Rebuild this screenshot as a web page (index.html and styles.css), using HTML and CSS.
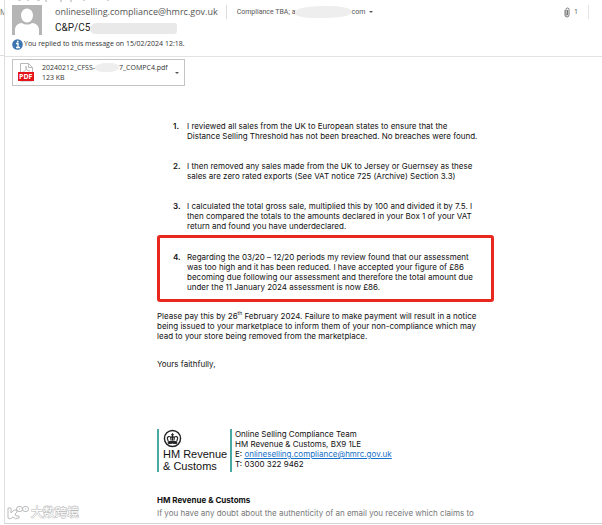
FILE: index.html
```
<!DOCTYPE html>
<html lang="en">
<head>
	<meta charset="UTF-8">
	<title>C&amp;P - Message</title>
	<link rel="stylesheet" href="styles.css">
</head>
<body>
	<div class="window">
		<div class="list-edge"><span class="list-text">M</span></div>
		<main class="mail">
			<svg class="clipped" width="130" height="2" viewBox="0 0 130 2"><path d="M13 0h3M22 0h2M32 0h3M41 0v2M56 0v2M66 0v2M78 0h2M102 0h2" stroke="#aaa"/></svg>
			<header class="mail-head">
				<svg class="avatar" width="30" height="30" viewBox="0 0 30 30">
					<rect width="30" height="30" fill="#b5b5b5"/>
					<ellipse cx="15" cy="10.500" rx="6" ry="7" fill="#fff"/>
					<path d="M3 30v-5c0-4 3-7 7-7 3 2 7 2 10 0 4 0 7 3 7 7v5z" fill="#fff"/>
				</svg>
				<div class="head-text">
					<div class="address-row">
						<span class="sender">onlineselling.compliance@hmrc.gov.uk</span>
						<span class="recipients">Compliance TBA; a<span class="smudge smudge-to"></span>com <i class="caret"></i></span>
						<span class="clip-count">
							<svg width="6" height="11" viewBox="0 0 6 11"><path d="M1 3v5a2 2 0 0 0 4 0V2.500a1.500 1.500 0 0 0-3 0V8h1.500V3" fill="none" stroke="#777"/></svg>
							1
						</span>
					</div>
					<h1 class="subject">C&amp;P/C5<span class="smudge smudge-subject"></span></h1>
				</div>
			</header>
			<p class="replied">
				<svg width="11" height="11" viewBox="0 0 11 11"><circle cx="5.500" cy="5.500" r="5.300" fill="#3c74b0"/><path d="M4 4.500h2V8M4 8.500h4M5 2.500h1.500" fill="none" stroke="#fff" stroke-width="1.300"/></svg>
				You replied to this message on 15/02/2024 12:18.
			</p>
			<div class="attachments">
				<button class="attachment" type="button">
					<svg width="17" height="19" viewBox="0 0 17 19">
						<path d="M2.500 18V.500h8l4 4V18z" fill="#fff" stroke="#b9b9b9"/>
						<path d="M10.500.500v4h4" fill="none" stroke="#b9b9b9"/>
						<path d="M5 9c3-1 4-4 3-6-1 2 1 5 4 5" fill="none" stroke="#bbb"/>
						<rect y="9" width="16" height="9" fill="#e4141b"/>
						<text x="1" y="16" class="pdf-label">PDF</text>
					</svg>
					<span class="file">20240212_CFSS-<span class="smudge smudge-file"></span>7_COMPC4.pdf<br>123 KB</span>
					<i class="caret"></i>
				</button>
			</div>
			<article class="letter">
				<ol class="findings">
					<li><span class="num">1.</span><p>I reviewed all sales from the UK to European states to ensure that the<br>Distance Selling Threshold has not been breached. No breaches were found.</p></li>
					<li><span class="num">2.</span><p>I then removed any sales made from the UK to Jersey or Guernsey as these<br>sales are zero rated exports (See VAT notice 725 (Archive) Section 3.3)</p></li>
					<li><span class="num">3.</span><p>I calculated the total gross sale, multiplied this by 100 and divided it by 7.5. I<br>then compared the totals to the amounts declared in your Box 1 of your VAT<br>return and found you have underdeclared.</p></li>
					<li class="marked"><span class="num">4.</span><p>Regarding the 03/20 – 12/20 periods my review found that our assessment<br>was too high and it has been reduced. I have accepted your figure of £86<br>becoming due following our assessment and therefore the total amount due<br>under the 11 January 2024 assessment is now £86.</p></li>
				</ol>
				<p class="demand">Please pay this by 26<sup>th</sup> February 2024. Failure to make payment will result in a notice<br>being issued to your marketplace to inform them of your non-compliance which may<br>lead to your store being removed from the marketplace.</p>
				<p class="closing">Yours faithfully,</p>
				<div class="signature">
					<div class="brand">
						<svg width="19" height="19" viewBox="0 0 20 20" fill="none" stroke="#222">
							<circle cx="10" cy="10" r="8.500" stroke-width="1.500"/>
							<path d="M5.500 13.500Q10 12 14.500 13.500V15.500Q10 14.300 5.500 15.500z" fill="#222"/>
							<path d="M5.500 13L4.500 9.500Q5.500 7 8 8.500L8.500 12M14.500 13l1-3.500Q14.500 7 12 8.500L11.500 12M10 12V4.500M8.500 6h3" stroke-width="1.200"/>
							<circle cx="10" cy="8.500" r="1" fill="#222"/>
						</svg>
						<strong class="brand-name">HM Revenue<br>&amp; Customs</strong>
					</div>
					<address class="contact">Online Selling Compliance Team<br>HM Revenue &amp; Customs, BX9 1LE<br>E: <a href="mailto:onlineselling.compliance@hmrc.gov.uk">onlineselling.compliance@hmrc.gov.uk</a><br>T: 0300 322 9462</address>
				</div>
				<h2 class="notice-title">HM Revenue &amp; Customs</h2>
				<p class="notice">If you have any doubt about the authenticity of an email you receive which claims to</p>
			</article>
			<div class="watermark">
				<svg width="22" height="15" viewBox="0 0 22 15" fill="none" stroke="#bbb"><path d="M1 3h3v5l3-3h3v2L8 9q0 3 4 2v2Q8 15 6 12q-2 3-5 1z"/><rect x="9.500" y="1.500" width="6" height="5" rx="2.500"/><rect x="15.500" y="1.500" width="6" height="5" rx="2.500"/><path d="M12 4h1M18 4h1"/></svg>
				<span>大数跨境</span>
			</div>
		</main>
	</div>
</body>
</html>
```
FILE: styles.css
```
* {
	box-sizing: border-box;
	margin: 0;
	padding: 0;
}
body {
	background-color: #fff;
	color: #111;
	font-family: Inter, "Liberation Sans", Arial, sans-serif;
	font-size: 8px;
	line-height: 10px;
}
.window {
	display: flex;
	min-height: 100vh;
	padding-bottom: 1px;
}
.list-edge {
	width: 4px;
	height: 56px;
	padding-top: 7px;
	overflow: hidden;
	border-bottom: 1px solid #ddd;
	color: #777;
}
.mail {
	position: relative;
	flex: 1;
	min-width: 0;
	border-left: 1px solid #dcdfe2;
	border-bottom: 1px solid #d2d4d5;
}
.clipped {
	display: block;
}
/* message header */
.mail-head {
	display: flex;
	gap: 13px;
	padding: 3px 0 0 7px;
	font-family: "Open Sans", "Noto Sans", sans-serif;
}
.avatar {
	flex: none;
}
.head-text {
	flex: 1;
	min-width: 0;
}
.address-row {
	display: flex;
	align-items: center;
	height: 14px;
	white-space: nowrap;
}
.sender {
	color: #555;
	font-size: 9px;
}
.recipients {
	display: flex;
	align-items: center;
	margin-left: 8px;
	padding-left: 10px;
	border-left: 1px solid #ddd;
	color: #555;
	font-family: Roboto, sans-serif;
	font-size: 7px;
	line-height: 14px;
}
.clip-count {
	display: flex;
	align-items: center;
	gap: 4px;
	margin-left: auto;
	margin-right: 13px;
	padding-right: 10px;
	border-right: 1px solid #e5e5e5;
	color: #555;
	font-size: 7px;
	line-height: 14px;
}
.caret {
	margin-left: 4px;
	border: 2px solid transparent;
	border-top-color: #555;
	border-bottom: 0;
}
.subject {
	display: flex;
	align-items: center;
	height: 18px;
	color: #222;
	font-family: Roboto, sans-serif;
	font-size: 10px;
	font-weight: 400;
}
.smudge {
	display: inline-block;
	background-color: #eee;
	border-radius: 50% 40% 45% 35%;
}
.smudge-to {
	width: 56px;
	height: 12px;
}
.smudge-subject {
	width: 87px;
	height: 11px;
	background-color: #e9e9e9;
	border-radius: 10px 4px 4px 8px;
}
.smudge-file {
	width: 24px;
	height: 9px;
	vertical-align: middle;
}
.replied {
	display: flex;
	align-items: center;
	gap: 1px;
	height: 21px;
	margin-top: -1px;
	padding: 0 0 4px 7px;
	border-bottom: 1px solid #e3e3e3;
	color: #333;
	font-family: "Open Sans", "Noto Sans", sans-serif;
	font-size: 7px;
}
.attachments {
	padding: 2px 7px;
}
.attachment {
	display: flex;
	align-items: center;
	width: 173px;
	height: 27px;
	padding: 0 5px;
	background-color: #fff;
	border: 1px solid #c4c4c4;
	color: #333;
	font-family: "Open Sans", "Noto Sans", sans-serif;
	font-size: 7px;
	line-height: 10px;
	text-align: left;
	white-space: nowrap;
}
.file {
	flex: 1;
	margin-left: 7px;
}
.pdf-label {
	fill: #fff;
	font-size: 7px;
	font-weight: 700;
}
/* letter */
.letter {
	padding: 33px 0 3px 152px;
	white-space: nowrap;
}
.findings {
	list-style: none;
}
.findings li {
	display: flex;
	margin-bottom: 20px;
	padding-left: 16px;
}
.num {
	width: 14px;
	font-weight: 600;
}
.findings .marked {
	width: 337px;
	margin-top: -16px;
	margin-bottom: 9px;
	padding: 14px 0 7px 13px;
	border: 3px solid #e8281e;
	border-radius: 3px;
}
sup {
	font-size: 5px;
	line-height: 0;
}
.closing {
	margin-top: 18px;
}
.signature {
	display: flex;
	margin-top: 60px;
}
.brand {
	width: 73px;
	height: 43px;
	padding-left: 4px;
	border-left: 2px solid #4ba9a4;
}
.brand svg {
	display: block;
}
.brand-name {
	display: block;
	font-family: "Liberation Sans", Arial, sans-serif;
	font-size: 11px;
	font-weight: 400;
	line-height: 12px;
}
.contact {
	padding-left: 3px;
	border-left: 2px solid #4ba9a4;
	font-style: normal;
}
.contact a {
	color: #1470c8;
}
.notice-title {
	margin-top: 23px;
	font-size: 8px;
	line-height: 10px;
}
.notice {
	margin-top: 3px;
	color: #777;
}
/* mark laid over the message corner */
.watermark {
	position: absolute;
	left: 2px;
	bottom: 2px;
	display: flex;
	align-items: center;
	gap: 2px;
	color: #fff;
	font-family: "Noto Sans CJK SC", sans-serif;
	font-size: 12px;
	line-height: 18px;
	-webkit-text-stroke: 1px #b8b8b8;
	paint-order: stroke fill;
}
```
